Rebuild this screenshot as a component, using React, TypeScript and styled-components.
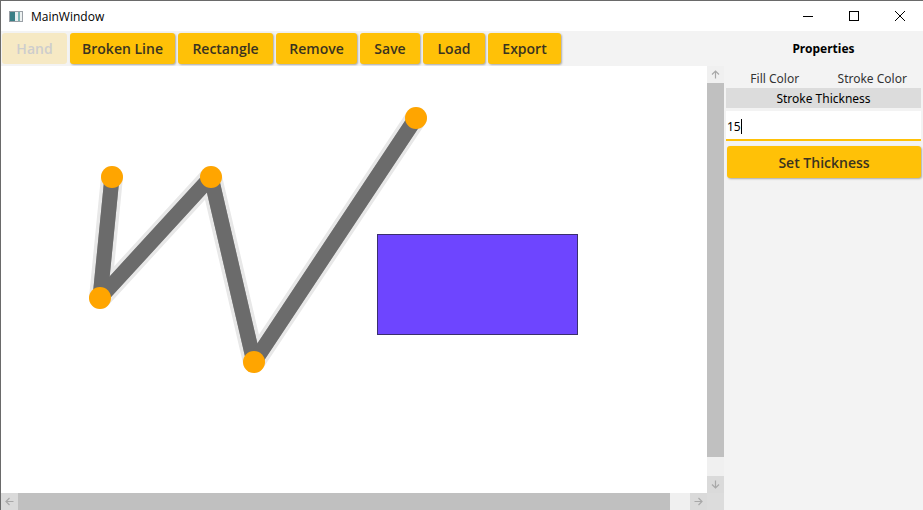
import React from "react"
import styled, {createGlobalStyle} from "styled-components"

const GlobalStyle = createGlobalStyle`
    html, body {
        margin: 0;
        padding: 0;
        background: #ffffff;
    }
    body {
        font-family: "Noto Sans", "Open Sans", "Liberation Sans", sans-serif;
    }
`

const font = `"Noto Sans", "Open Sans", "Liberation Sans", sans-serif`
const buttonFont = `"Open Sans", "Noto Sans", "Liberation Sans", sans-serif`

export const Window = styled.div`
    width: 923px;
    height: 510px;
    box-sizing: border-box;
    border-top: 1px solid #6a6a6a;
    border-left: 1px solid #6a6a6a;
    display: flex;
    flex-direction: column;
    overflow: hidden;
    font-family: ${font};
`

export const TitleBar = styled.div`
    height: 30px;
    flex: 0 0 auto;
    display: flex;
    align-items: center;
    background: #ffffff;
`

export const TitleIcon = styled.div`
    width: 14px;
    height: 11px;
    margin: 0 8px 0 8px;
    box-sizing: border-box;
    border: 1px solid #9aa0a6;
    background: linear-gradient(90deg, #3a7f86 0 45%, #e8eef0 45% 70%, #7ab3b3 70% 85%, #eef2f2 85%);
`

export const TitleText = styled.div`
    font-size: 12px;
    color: #000;
    flex: 1;
    font-family: "Open Sans", "Noto Sans", sans-serif;
`

export const CaptionButton = styled.div`
    width: 46px;
    height: 30px;
    display: flex;
    align-items: center;
    justify-content: center;
`

export const Body = styled.div`
    flex: 1;
    display: flex;
    background: #f3f3f3;
    min-height: 0;
`

export const LeftColumn = styled.div`
    width: 723px;
    display: flex;
    flex-direction: column;
`

export const Toolbar = styled.div`
    height: 35px;
    display: flex;
    align-items: center;
    gap: 3px;
    padding-left: 1px;
    box-sizing: border-box;
`

export const ToolButton = styled.div<{w: number, disabled?: boolean}>(({w, disabled}) => `
    width: ${w}px;
    height: 31px;
    box-sizing: border-box;
    display: flex;
    align-items: center;
    justify-content: center;
    border-radius: 3px;
    font-family: ${buttonFont};
    font-size: 14px;
    font-weight: 600;
    ${disabled ? `
        background: #f6e9c4;
        color: #cdcdcd;
    ` : `
        background: #ffc107;
        color: #3a3320;
        box-shadow: 1px 1px 2px rgba(0,0,0,0.3);
    `}
`)

export const ScrollViewer = styled.div`
    flex: 1;
    display: grid;
    grid-template-columns: 706px 17px;
    grid-template-rows: 427px 17px;
    background: #ffffff;
`

export const Canvas = styled.div`
    background: #ffffff;
    overflow: hidden;
`

export const VScroll = styled.div`
    display: flex;
    flex-direction: column;
    background: #f0f0f0;
`

export const HScroll = styled.div`
    display: flex;
    background: #f0f0f0;
`

export const ScrollArrow = styled.div<{dim?: boolean}>(({dim}) => `
    width: 17px;
    height: 17px;
    flex: 0 0 auto;
    display: flex;
    align-items: center;
    justify-content: center;
    background: ${dim ? "#dadada" : "#f0f0f0"};
`)

export const Thumb = styled.div<{size: number}>(({size}) => `
    flex: 0 0 ${size}px;
    background: #c0c0c0;
`)

export const Spacer = styled.div`
    flex: 1;
`

export const Corner = styled.div`
    background: #dcdcdc;
`

export const Panel = styled.div`
    flex: 1;
    display: flex;
    flex-direction: column;
    padding: 0 2px;
`

export const PanelTitle = styled.div`
    height: 35px;
    display: flex;
    align-items: center;
    justify-content: center;
    font-size: 12px;
    font-weight: 700;
    color: #000;
`

export const TabStrip = styled.div`
    display: flex;
    flex-wrap: wrap;
    margin-top: 3px;
`

export const Tab = styled.div<{selected?: boolean, full?: boolean}>(({selected, full}) => `
    flex: ${full ? "0 0 100%" : "1"};
    height: ${full ? 20 : 19}px;
    display: flex;
    align-items: center;
    justify-content: center;
    font-size: 12px;
    color: ${selected ? "#000" : "#333"};
    background: ${selected ? "#dcdcdc" : "transparent"};
`)

export const TextBox = styled.div`
    margin-top: 3px;
    height: 30px;
    box-sizing: border-box;
    background: #ffffff;
    border-bottom: 2px solid #ffc107;
    display: flex;
    align-items: center;
    padding: 3px 0 0 1px;
    font-size: 12px;
    color: #000;
`

export const Caret = styled.span`
    display: inline-block;
    width: 1px;
    height: 15px;
    background: #000;
`

export const ActionButton = styled.div`
    margin: 5px 0 0 1px;
    height: 32px;
    border-radius: 3px;
    background: #ffc107;
    color: #3a3320;
    font-family: ${buttonFont};
    font-size: 14px;
    font-weight: 600;
    display: flex;
    align-items: center;
    justify-content: center;
    box-shadow: 1px 1px 2px rgba(0,0,0,0.3);
`

const Arrow: React.FC<{dir: "up" | "down" | "left" | "right"}> = ({dir}) => {
    const rot = {up: 0, right: 90, down: 180, left: 270}[dir]
    return (
        <svg width="9" height="9" viewBox="0 0 9 9" style={{transform: `rotate(${rot}deg)`}}>
            <path d="M4.5 1 V8.5 M1 4.5 L4.5 1 L8 4.5" stroke="#a8a8a8" strokeWidth="1.2" fill="none" />
        </svg>
    )
}

const points: [number, number][] = [[111, 111], [99, 232], [210, 111], [253, 296], [415, 52]]

const Drawing: React.FC = () => {
    const poly = points.map(p => p.join(",")).join(" ")
    return (
        <svg width="706" height="427">
            <polyline points={poly} fill="none" stroke="#e8e8e8" strokeWidth="22" strokeLinejoin="round" strokeLinecap="round" />
            <polyline points={poly} fill="none" stroke="#9c9c9c" strokeWidth="15" strokeLinejoin="bevel" />
            {points.slice(1).map((p, i) => (
                <line key={i} x1={points[i][0]} y1={points[i][1]} x2={p[0]} y2={p[1]} stroke="#6b6b6b" strokeWidth="15" strokeLinecap="butt" />
            ))}
            {points.map((p, i) => (
                <circle key={i} cx={p[0]} cy={p[1]} r="11" fill="#ffa500" />
            ))}
            <rect x="376.5" y="168.5" width="200" height="100" fill="#6e45ff" stroke="#3a2f6e" strokeWidth="1" />
        </svg>
    )
}

const tools = [
    {label: "Hand", w: 65, disabled: true},
    {label: "Broken Line", w: 105},
    {label: "Rectangle", w: 95},
    {label: "Remove", w: 81},
    {label: "Save", w: 60},
    {label: "Load", w: 62},
    {label: "Export", w: 73},
]

const App: React.FC = () => {
    return (
        <Window>
            <GlobalStyle />
            <TitleBar>
                <TitleIcon />
                <TitleText>MainWindow</TitleText>
                <CaptionButton>
                    <svg width="10" height="10"><path d="M0 5.5 H10" stroke="#000" strokeWidth="1" /></svg>
                </CaptionButton>
                <CaptionButton>
                    <svg width="10" height="10"><rect x="0.5" y="0.5" width="9" height="9" stroke="#000" fill="none" /></svg>
                </CaptionButton>
                <CaptionButton>
                    <svg width="10" height="10"><path d="M0 0 L10 10 M10 0 L0 10" stroke="#000" strokeWidth="1" /></svg>
                </CaptionButton>
            </TitleBar>
            <Body>
                <LeftColumn>
                    <Toolbar>
                        {tools.map(t => (
                            <ToolButton key={t.label} w={t.w} disabled={t.disabled}>{t.label}</ToolButton>
                        ))}
                    </Toolbar>
                    <ScrollViewer>
                        <Canvas>
                            <Drawing />
                        </Canvas>
                        <VScroll>
                            <ScrollArrow><Arrow dir="up" /></ScrollArrow>
                            <Thumb size={374} />
                            <Spacer />
                            <ScrollArrow dim><Arrow dir="down" /></ScrollArrow>
                        </VScroll>
                        <HScroll>
                            <ScrollArrow dim><Arrow dir="left" /></ScrollArrow>
                            <Thumb size={652} />
                            <Spacer />
                            <ScrollArrow dim><Arrow dir="right" /></ScrollArrow>
                        </HScroll>
                        <Corner />
                    </ScrollViewer>
                </LeftColumn>
                <Panel>
                    <PanelTitle>Properties</PanelTitle>
                    <TabStrip>
                        <Tab>Fill Color</Tab>
                        <Tab>Stroke Color</Tab>
                        <Tab selected full>Stroke Thickness</Tab>
                    </TabStrip>
                    <TextBox>15<Caret /></TextBox>
                    <ActionButton>Set Thickness</ActionButton>
                </Panel>
            </Body>
        </Window>
    )
}

export default App
